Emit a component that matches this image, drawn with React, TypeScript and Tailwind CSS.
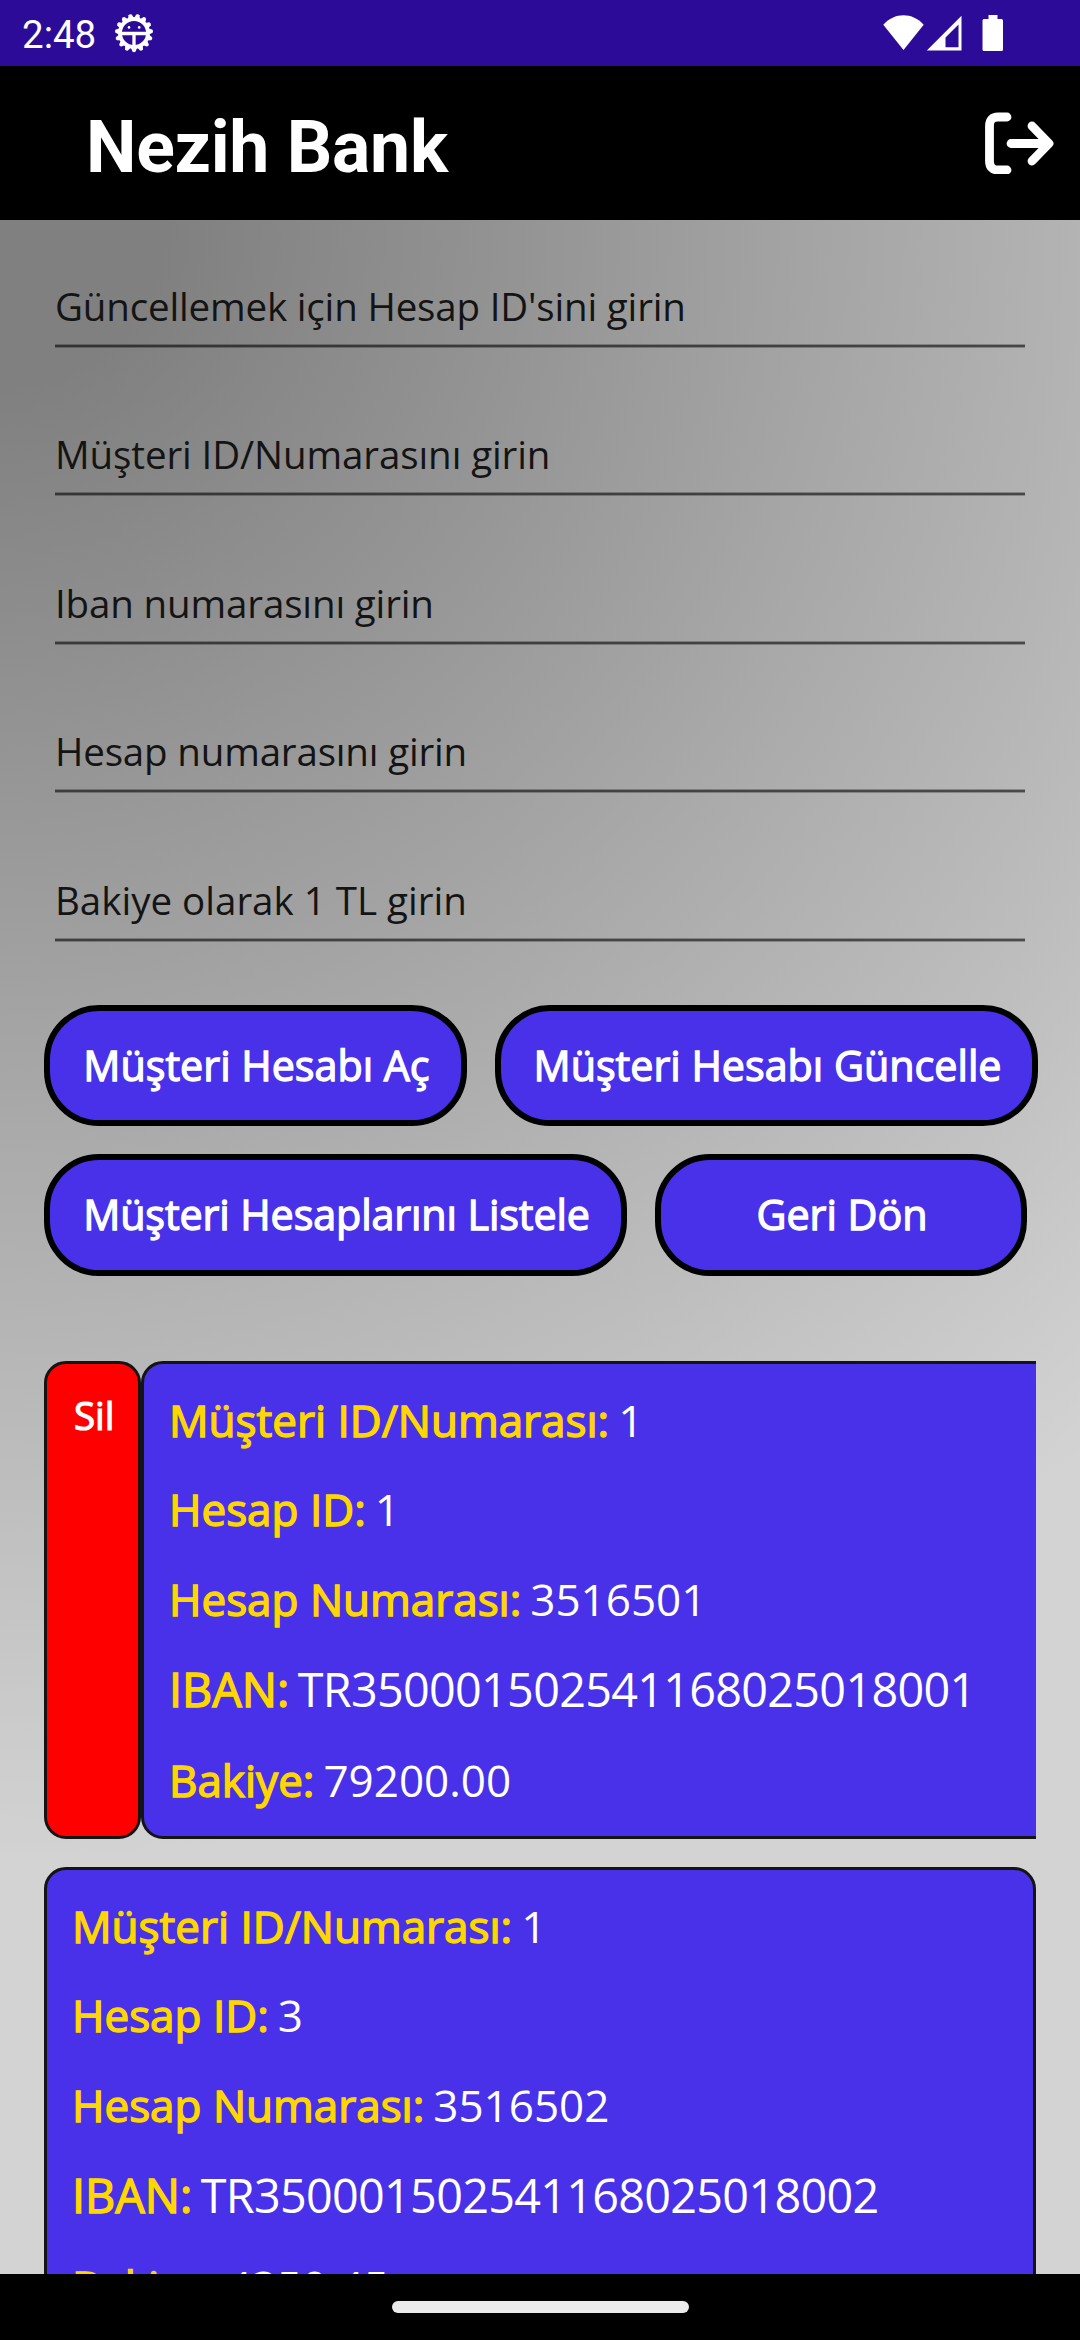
type Account = { customer: string; id: string; number: string; iban: string; balance: string };

const fields = [
  { hint: "Güncellemek için Hesap ID'sini girin", spacing: "tracking-[-0.17px]" },
  { hint: "Müşteri ID/Numarasını girin", spacing: "tracking-[-0.1px]" },
  { hint: "Iban numarasını girin", spacing: "tracking-[-0.14px]" },
  { hint: "Hesap numarasını girin", spacing: "tracking-[-0.17px]" },
  { hint: "Bakiye olarak 1 TL girin", spacing: "tracking-normal" },
];

const accounts: Account[] = [
  { customer: "1", id: "1", number: "3516501", iban: "TR350001502541168025018001", balance: "79200.00" },
  { customer: "1", id: "3", number: "3516502", iban: "TR350001502541168025018002", balance: "4350.45" },
];

const teeth = Array.from({ length: 15 }, (_, i) => 180 + i * 24);

function DebugIcon() {
  return (
    <svg className="ml-[18px] h-10 w-10" viewBox="0 0 40 40" fill="none">
      <circle cx="20" cy="20" r="14" stroke="white" strokeWidth="3.8" />
      {teeth.map((angle) => (
        <path key={angle} d="M16.700 5.800 18.400 1.500q1.600-1.400 3.200 0L23.300 5.800z" fill="white" transform={`rotate(${angle} 20 20)`} />
      ))}
      <path d="M7 20.500h26M20 20.500v14" stroke="white" strokeWidth="3.3" />
      <circle cx="15" cy="14.400" r="1.300" fill="white" />
      <circle cx="25.200" cy="14.400" r="1.300" fill="white" />
    </svg>
  );
}

function StatusBar() {
  return (
    <div className="flex h-[66px] shrink-0 items-center bg-[#2c0b98] pr-[76px] pl-[22px] text-white">
      <span className="pt-[3px] font-[Roboto] text-[38.5px] leading-[63px]">2:48</span>
      <DebugIcon />
      <svg className="ml-auto h-9 w-[42px]" viewBox="0 0 42 36" fill="white">
        <path d="M20.500 35 .3 9.700C6 3.500 13 .3 20.500 .3s14.500 3.200 20.200 9.400z" />
      </svg>
      <svg className="ml-px h-9 w-[36px]" viewBox="0 0 36 36">
        <path fill="white" fillRule="evenodd" d="M.800 35.500 35.500 .800v34.700zM19.500 32.300h13V9.500L19.500 22.500z" />
      </svg>
      <svg className="ml-5 h-9 w-[22px]" viewBox="0 0 22 36" fill="white">
        <path d="M6.500 0h9v4H19.500q1.500 0 1.500 1.500v29q0 1.500-1.500 1.500H2q-1.500 0-1.500-1.500v-29Q.5 4 2 4h4.500z" />
      </svg>
    </div>
  );
}

function Header() {
  return (
    <header className="flex h-[154px] shrink-0 items-center justify-between bg-black pr-[26px] pl-[86px] text-white">
      <h1 className="pt-[9px] font-[Roboto] text-[71.5px] leading-[84px] font-bold tracking-[-0.25px]">Nezih Bank</h1>
      <svg className="h-[62px] w-[70px]" viewBox="0 0 70 62" fill="none" stroke="white" strokeWidth="8.800" strokeLinecap="round" strokeLinejoin="round">
        <path d="M23 5H14Q5.500 5 5.500 14v35q0 9 8.500 9h9M27 31.500h38M48 14 65 31.500 48 49" />
      </svg>
    </header>
  );
}

function Button({ label, size }: { label: string; size: string }) {
  return (
    <button
      className={`${size} shrink-0 rounded-[55px] border-[6px] border-black bg-[#4831e9] pl-[2px] text-[41.25px] whitespace-nowrap text-white [-webkit-text-stroke:1.3px_currentColor]`}
    >
      {label}
    </button>
  );
}

function Row({ label, value }: { label: string; value: string }) {
  return (
    <div className="flex gap-[9px] text-[44px] leading-[60px] whitespace-nowrap">
      <span className="text-[#ffd700] [-webkit-text-stroke:1.4px_currentColor]">{label}</span>
      <span className="text-white">{value}</span>
    </div>
  );
}

function AccountCard({ account }: { account: Account }) {
  return (
    <div className="flex h-[478px] w-[992px] shrink-0 flex-col gap-[29.5px] rounded-[22px] border-[3px] border-[#141414] bg-[#4831e9] pt-[26px] pl-[25px]">
      <Row label="Müşteri ID/Numarası:" value={account.customer} />
      <Row label="Hesap ID:" value={account.id} />
      <Row label="Hesap Numarası:" value={account.number} />
      <div className="flex gap-[8.500px] text-[46.75px] leading-[62px] whitespace-nowrap">
        <span className="text-[#ffd700] [-webkit-text-stroke:1.4px_currentColor]">IBAN:</span>
        <span className="tracking-[-0.71px] text-white">{account.iban}</span>
      </div>
      <Row label="Bakiye:" value={account.balance} />
    </div>
  );
}

export default function App() {
  return (
    <div className="flex h-[2340px] w-[1080px] flex-col overflow-hidden font-['Open_Sans',sans-serif]">
      <StatusBar />
      <Header />
      <main className="h-[2054px] shrink-0 overflow-hidden bg-[radial-gradient(circle_1643px_at_0_0,#808080_10%,#d3d3d3)] px-11 pt-[59.8px]">
        <div className="flex flex-col gap-[80.5px] px-[11px]">
          {fields.map(({ hint, spacing }) => (
            <div key={hint} className="flex h-[68px] flex-col justify-between">
              <span className={`${spacing} text-[38.5px] leading-[52px] whitespace-nowrap text-[#141414]`}>{hint}</span>
              <div className="h-1 border-y border-black/25 bg-black/60 bg-clip-padding" />
            </div>
          ))}
        </div>
        <div className="mt-[63.2px] flex gap-7">
          <Button label="Müşteri Hesabı Aç" size="h-[121px] w-[423px]" />
          <Button label="Müşteri Hesabı Güncelle" size="h-[121px] w-[543px]" />
        </div>
        <div className="mt-7 flex gap-7">
          <Button label="Müşteri Hesaplarını Listele" size="h-[122px] w-[583px] pb-px tracking-[-0.1px]" />
          <Button label="Geri Dön" size="h-[122px] w-[372px] pb-px" />
        </div>
        <div className="mt-[85px] flex flex-col gap-7">
          <div className="flex overflow-hidden">
            <div className="h-[478px] w-[97px] shrink-0 rounded-[22px] border-[3px] border-[#141414] bg-[#ff0000] pt-[25px] pl-[27px] text-[38.5px] leading-[52px] text-white [-webkit-text-stroke:1.2px_currentColor]">
              Sil
            </div>
            <AccountCard account={accounts[0]} />
          </div>
          <AccountCard account={accounts[1]} />
        </div>
      </main>
      <footer className="flex h-[66px] shrink-0 justify-center bg-black pt-[27px]">
        <div className="h-3 w-[297px] rounded-full bg-[#ebebeb]" />
      </footer>
    </div>
  );
}
